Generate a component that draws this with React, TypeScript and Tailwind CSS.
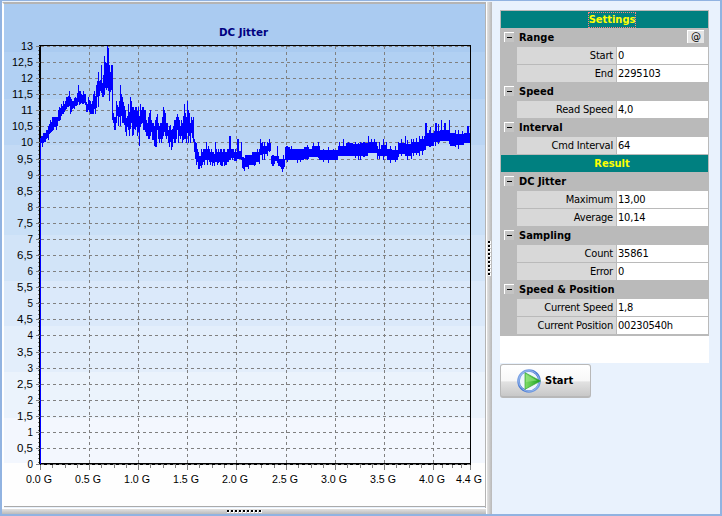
import type { ReactNode } from "react";

// One entry per pixel column: lowest and highest sample, starting at x = 41.
const samples =
  "136,143 136,147 133,143 133,142 133,142 130,139 130,138 126,140 124,134 120,133 122,132 117,131 117,130 117,127 117,127 117,130 117,126 110,121 107,121 108,120 104,116 106,114 101,114 104,112 101,110 97,109 97,107 96,107 91,106 97,114 99,112 101,109 101,108 98,109 97,106 98,106 93,105 85,102 91,105 91,104 94,103 95,104 91,104 94,103 94,105 102,112 104,112 97,110 100,112 101,114 104,114 101,114 94,114 91,109 96,114 85,108 81,97 72,107 81,96 80,91 65,93 83,97 75,97 56,95 62,88 63,90 46,88 48,91 65,101 72,92 65,90 65,120 113,123 117,130 117,130 101,123 105,116 107,126 101,117 85,126 " +
  "94,116 97,123 102,123 106,125 110,132 118,136 116,127 104,130 112,136 97,129 101,123 107,136 107,135 110,129 107,130 107,127 111,136 107,132 116,146 104,127 110,124 107,123 107,130 110,130 110,132 120,136 123,136 117,139 113,139 110,136 120,132 123,140 123,140 126,146 120,147 117,147 114,130 123,139 126,143 123,139 123,143 117,139 107,136 110,132 113,136 123,139 123,136 130,143 126,147 125,142 130,150 129,147 126,139 120,143 120,143 117,139 114,130 117,143 120,136 126,139 120,136 123,143 116,140 104,139 113,139 117,143 101,133 110,143 113,136 123,143 117,133 120,138 117,142 " +
  "139,152 142,159 143,165 149,162 152,169 156,169 156,166 149,168 152,165 149,162 149,165 149,160 142,160 149,165 146,160 149,162 152,165 149,162 152,166 152,163 154,166 142,162 149,162 152,165 149,163 152,162 149,165 149,166 152,166 149,162 149,166 152,172 149,166";
const columns = samples.split(" ").map((p) => p.split(",").map(Number)).slice(0, 184);

// The calmer second half: runs of [x, width, top, bottom].
const runs: number[][] = [
  [225, 2, 152, 165], [227, 2, 149, 162], [229, 2, 136, 160], [231, 3, 149, 158],
  [234, 3, 152, 161], [237, 2, 139, 159], [239, 2, 151, 159], [241, 1, 142, 160],
  [242, 2, 157, 168], [244, 1, 158, 171], [245, 4, 155, 167], [249, 3, 155, 165],
  [252, 4, 152, 165], [256, 4, 152, 162], [260, 3, 143, 155], [263, 4, 146, 154],
  [267, 4, 143, 151], [271, 4, 156, 164], [275, 2, 156, 161], [277, 1, 146, 163],
  [278, 2, 159, 166], [280, 5, 159, 167],
  [285, 5, 147, 160], [290, 14, 149, 160], [304, 5, 147, 159], [309, 3, 149, 157],
  [312, 8, 146, 157], [320, 18, 150, 160], [338, 8, 146, 156], [346, 7, 143, 156],
  [353, 7, 144, 156], [360, 8, 143, 156], [368, 9, 142, 153], [377, 4, 149, 156],
  [381, 6, 145, 156], [387, 5, 149, 160], [392, 6, 150, 160], [398, 8, 143, 154],
  [406, 5, 144, 156], [411, 8, 142, 153], [419, 5, 139, 151], [424, 2, 136, 150],
  [426, 8, 133, 146], [434, 6, 131, 142], [440, 10, 130, 141], [450, 6, 133, 146],
  [456, 8, 134, 145], [464, 6, 133, 143],
];
const spikes: number[][] = [
  [232, 149, 160], [235, 149, 161], [243, 159, 169], [248, 155, 169], [251, 155, 165], [254, 152, 166],
  [257, 149, 162], [259, 149, 164], [260, 139, 155], [262, 142, 160], [264, 142, 160], [267, 142, 156],
  [269, 139, 152], [272, 155, 166], [273, 155, 166], [278, 156, 165], [281, 159, 169], [282, 159, 172],
  [283, 155, 169], [286, 146, 160],
  [287, 146, 162], [291, 146, 160], [297, 149, 163], [300, 149, 162], [307, 145, 160], [313, 143, 157],
  [318, 142, 158], [319, 146, 160], [323, 149, 162], [328, 147, 163], [333, 149, 160], [339, 142, 156],
  [343, 139, 156], [348, 142, 156], [355, 142, 158], [358, 143, 160], [360, 142, 160], [363, 142, 157],
  [364, 142, 157], [368, 136, 153], [371, 139, 153], [374, 139, 153], [377, 146, 159], [379, 142, 159],
  [383, 139, 160], [386, 142, 156], [390, 146, 163], [395, 146, 162], [398, 142, 157], [401, 139, 156],
  [405, 136, 156], [407, 140, 160], [411, 139, 159], [413, 139, 156], [416, 138, 155], [419, 136, 156],
  [422, 136, 155], [425, 123, 150], [426, 123, 146], [429, 130, 147], [430, 127, 147], [435, 123, 146],
  [436, 123, 140], [438, 124, 144], [441, 120, 138], [444, 123, 138], [445, 123, 140], [449, 120, 144],
  [455, 130, 147], [458, 130, 149], [462, 131, 145], [467, 126, 142], [468, 126, 142],
];

const yLabels = Array.from({ length: 27 }, (_, i) => String(13 - i / 2).replace(".", ","));
const bands: [number, number, string][] = [
  [5, 47, "#aacbf1"], [52, 47, "#b1d0f3"], [99, 46, "#bad5f4"], [145, 45, "#c3daf5"],
  [190, 45, "#cae0f7"], [235, 46, "#d2e4f8"], [281, 45, "#dbe9fa"], [326, 46, "#e3eefb"],
  [372, 46, "#ebf3fc"], [418, 45, "#f3f7fe"], [463, 44, "#fefefe"],
];
const xTicks = [40, 89, 138, 187, 236, 286, 335, 384, 433, 470];
const xLabels = ["0.0 G", "0.5 G", "1.0 G", "1.5 G", "2.0 G", "2.5 G", "3.0 G", "3.5 G", "4.0 G", "4.4 G"];

function JitterChart() {
  return (
    <svg width="481" height="502" viewBox="4 4 481 502" className="block" shapeRendering="crispEdges">
      {bands.map(([y, h, fill]) => <rect key={y} x="4" y={y === 5 ? 4 : y} width="481" height={h + 1} fill={fill} />)}
      <text x="219" y="36" textLength="49" lengthAdjust="spacingAndGlyphs" fontSize="11" fontWeight="700" fill="#000080" fontFamily="DejaVu Sans, sans-serif">DC Jitter</text>
      <rect x="40.5" y="45.5" width="430" height="419" fill="none" stroke="#000" />
      <path d="M39.5 45V465M40 463.5H471" stroke="#000" />
      {yLabels.map((label, i) => {
        const y = Math.round(46 + i * 16.08) + 0.5;
        return (
          <g key={label}>
            <path d={`M41 ${y}H470`} stroke="#808080" strokeDasharray="3 3" />
            <path d={`M36 ${y}H40`} stroke="#808080" />
            <text x="33" y={y + 3.5} textAnchor="end" textLength={[5.5, 12, 16, 21][label.length - 1]} lengthAdjust="spacingAndGlyphs" fontSize="11.5" fontFamily="Liberation Sans, sans-serif">{label}</text>
          </g>
        );
      })}
      <path d="M38.5 46V464" stroke="#777" strokeDasharray="1 3" />
      {xTicks.map((x, i) => (
        <g key={x}>
          <path d={`M${x + 0.5} 465V470`} stroke="#808080" />
          {i > 0 && i < 9 && <path d={`M${x + 0.5} 46V463`} stroke="#808080" strokeDasharray="3 3" />}
          {i < 9 && [1, 2, 3].map((n) => <path key={n} d={`M${Math.round(x + ((xTicks[i + 1] - x) * n) / 4) + 0.5} 465V468`} stroke="#808080" />)}
          <text x={x - 14} y="483" textLength="26" lengthAdjust="spacingAndGlyphs" fontSize="11" fontFamily="Liberation Sans, sans-serif">{xLabels[i]}</text>
        </g>
      ))}
      <path d="M40.5 138V464" stroke="#0000ff" />
      <g fill="#0000ff">
        {columns.map(([top, bottom], i) => <rect key={i} x={41 + i} y={top} width="1" height={bottom - top} />)}
        {runs.map(([x, w, top, bottom]) => <rect key={x} x={x} y={top} width={w} height={bottom - top} />)}
        {spikes.map(([x, top, bottom]) => <rect key={x} x={x} y={top} width="1" height={bottom - top} />)}
      </g>
    </svg>
  );
}

function Label({ children, bold }: { children: string; bold?: boolean }) {
  return (
    <span
      className={
        bold
          ? "block font-['DejaVu_Sans_Condensed','DejaVu_Sans',sans-serif] text-[11px] leading-4 font-bold whitespace-nowrap"
          : "block font-['DejaVu_Sans_Condensed','DejaVu_Sans',sans-serif] text-[11px] leading-[18px] tracking-[-0.2px] whitespace-nowrap"
      }
    >
      {children}
    </span>
  );
}

function Banner({ title, focused }: { title: string; focused?: boolean }) {
  return (
    <div className="flex h-[18px] items-center justify-center border-b border-[#bababa] bg-[#008080] pl-[15px] text-[#ffff00]">
      <div className={focused ? "flex h-[16px] items-center border border-dotted border-[#ff8080]" : "flex h-[16px] items-center"}>
        <Label bold>{title}</Label>
      </div>
    </div>
  );
}

function Group({ title, rows, action }: { title: string; rows: [string, string][]; action?: ReactNode }) {
  return (
    <section className="bg-[#bababa]">
      <header className="flex h-[18px] items-start pl-[3px]">
        <span className="mt-[3px] flex size-[10px] items-center justify-center border-t border-l border-white bg-[#c4c4c4]">
          <span className="h-px w-[5px] bg-black" />
        </span>
        <span className="ml-[5px] pt-px"><Label bold>{title}</Label></span>
        {action}
      </header>
      {rows.map(([name, value]) => (
        <div key={name} className="flex h-[18px] pb-px pl-4">
          <div className="flex w-[99px] justify-end bg-[#d8d8d8] pr-[3px]"><Label>{name}</Label></div>
          <div className="ml-px flex-1 bg-white pl-px"><Label>{value}</Label></div>
        </div>
      ))}
    </section>
  );
}

function PlayIcon() {
  return (
    <svg width="24" height="24" viewBox="0 0 24 24" className="block">
      <defs>
        <linearGradient id="ring" x2="1" y2="1"><stop stopColor="#92b5ed" /><stop offset=".5" stopColor="#4273cf" /><stop offset="1" stopColor="#83a9e6" /></linearGradient>
        <linearGradient id="play" x2="1"><stop stopColor="#82de6b" /><stop offset="1" stopColor="#16a01b" /></linearGradient>
      </defs>
      <circle cx="12" cy="12" r="10.5" fill="#eef5fc" stroke="url(#ring)" strokeWidth="2.6" />
      <circle cx="12" cy="12" r="10.3" fill="none" stroke="#a8c6f1" strokeWidth=".7" />
      <path d="M8 3.7 23.5 12 8 20.3Z" fill="url(#play)" stroke="#35a52e" strokeWidth=".7" />
      <path d="M9 5.5 20 11.5 9 13Z" fill="#a4e98d" opacity=".55" />
    </svg>
  );
}

function Grip({ vertical }: { vertical?: boolean }) {
  return (
    <div className={vertical ? "flex flex-col gap-px" : "flex gap-px"}>
      {Array.from({ length: 9 }, (_, i) => <span key={i} className="size-[3px] border-r border-b border-white bg-black" />)}
    </div>
  );
}

export default function App() {
  return (
    <main className="flex h-[516px] w-[722px] flex-col overflow-hidden border-x-2 border-t border-b-2 border-[#91b3e1] bg-[#e9f2fd] text-black">
      <div className="flex min-h-0 flex-1 pt-px">
        <div className="flex w-[484px] flex-col">
          <div className="h-[506px] border-t-2 border-r border-l-2 border-[#b4b4b4] border-l-white">
            <div className="h-[503px] border-b border-b-[#aaa]">
              <JitterChart />
            </div>
          </div>
          <div className="flex h-[6px] items-center justify-center border-t border-white bg-gradient-to-b from-[#e2e2e2] to-[#bbb]">
            <Grip />
          </div>
        </div>
        <div className="flex w-[6px] items-center justify-center border-l border-white bg-gradient-to-r from-[#e2e2e2] to-[#b8b8b8]">
          <Grip vertical />
        </div>
        <aside className="min-w-0 flex-1 pt-2 pl-2">
          <div className="h-[353px] w-[209px] bg-white">
            <div className="border border-[#bababa]">
              <Banner title="Settings" focused />
              <Group title="Range" rows={[["Start", "0"], ["End", "2295103"]]} action={<button className="mt-px mr-1 ml-auto flex h-[13px] w-[17px] items-center justify-center border-t border-l border-white bg-[#e4e4e4] font-['DejaVu_Sans'] text-[10px] leading-none">@</button>} />
              <Group title="Speed" rows={[["Read Speed", "4,0"]]} />
              <Group title="Interval" rows={[["Cmd Interval", "64"]]} />
              <Banner title="Result" />
              <Group title="DC Jitter" rows={[["Maximum", "13,00"], ["Average", "10,14"]]} />
              <Group title="Sampling" rows={[["Count", "35861"], ["Error", "0"]]} />
              <Group title="Speed &amp; Position" rows={[["Current Speed", "1,8"], ["Current Position", "00230540h"]]} />
            </div>
          </div>
          <button className="mt-px flex h-[34px] w-[91px] items-center rounded-[3px] border border-b-2 border-[#b8b8b8] bg-[linear-gradient(#fff_0%,#f7f7f7_52%,#e2e2e2_54%,#c8c8c8_100%)] pl-4">
            <PlayIcon />
            <span className="ml-1"><Label bold>Start</Label></span>
          </button>
        </aside>
      </div>
    </main>
  );
}
